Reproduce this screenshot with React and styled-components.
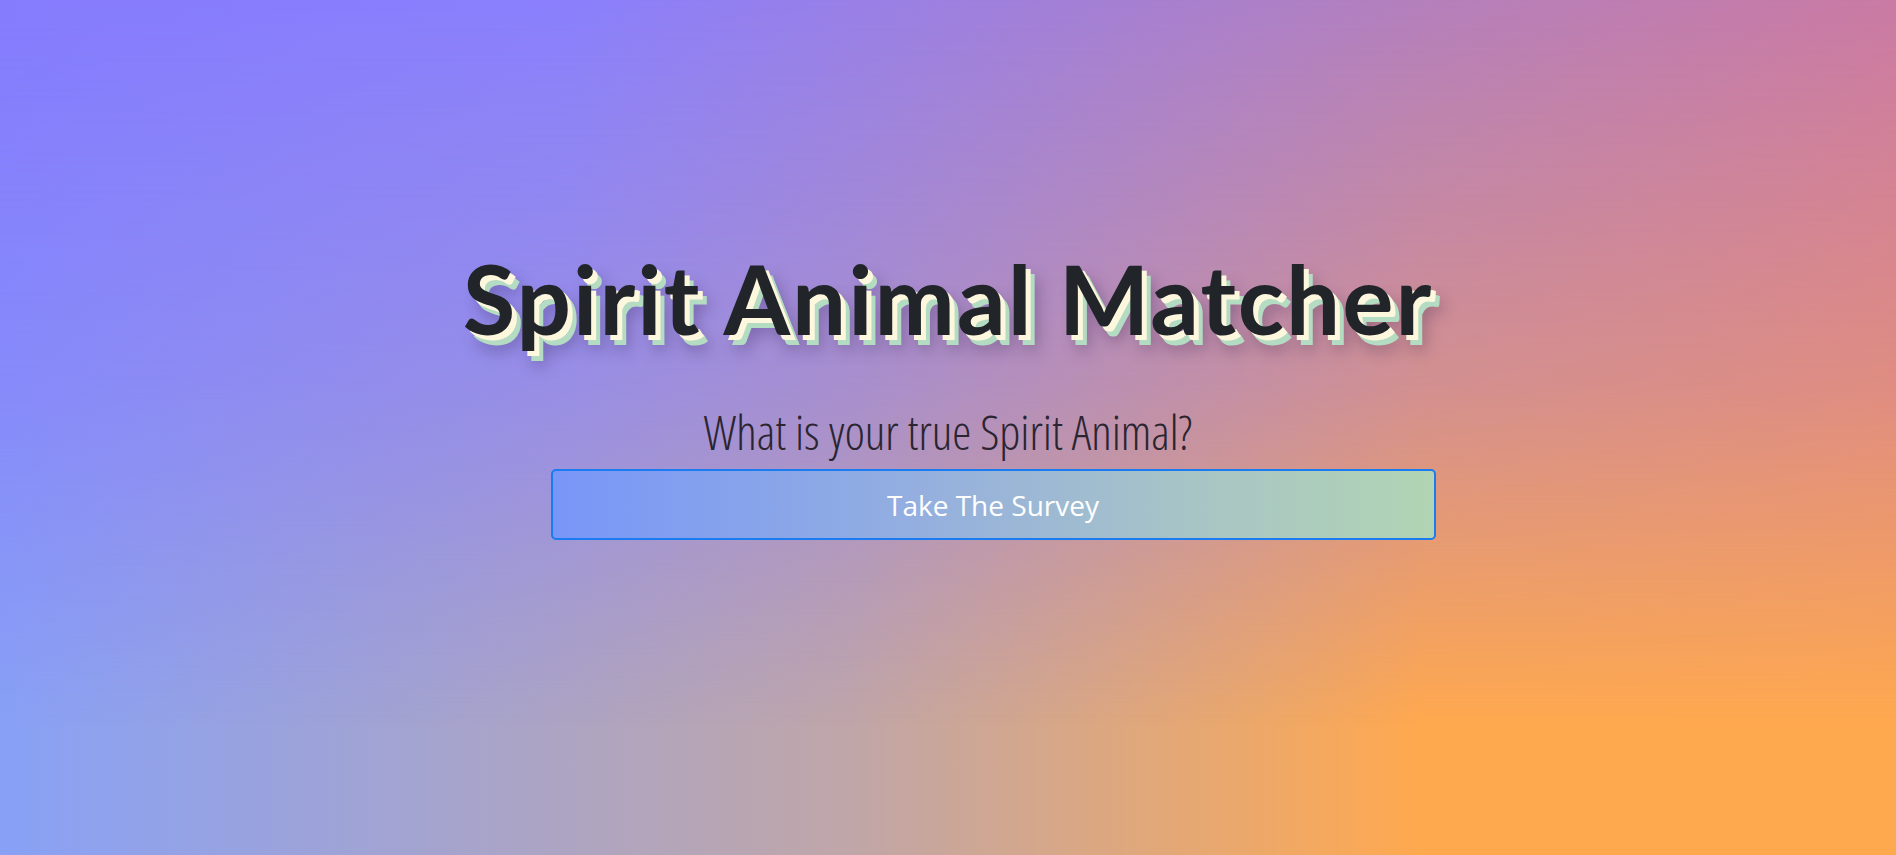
import styled, { createGlobalStyle } from 'styled-components';

const GlobalStyle = createGlobalStyle`
  html, body {
    margin: 0;
    padding: 0;
    height: 100%;
  }
  body {
    font-family: 'Open Sans', 'Noto Sans', sans-serif;
    color: #212529;
  }
`;

const Page = styled.main`
  position: relative;
  min-height: 100vh;
  overflow: hidden;
  background: linear-gradient(to right, #88a1f6 0%, #c0a6a8 45%, #ffa94f 75%, #ffa94f 100%);

  &::before {
    content: '';
    position: absolute;
    inset: 0;
    background: linear-gradient(to right, #857bfd 0%, #8a7ffc 30%, #b47fbc 75%, #ca7aa4 100%);
    -webkit-mask-image: linear-gradient(to bottom, #000 0%, rgba(0,0,0,0.6) 45%, transparent 85%);
    mask-image: linear-gradient(to bottom, #000 0%, rgba(0,0,0,0.6) 45%, transparent 85%);
  }
`;

const Hero = styled.section`
  position: relative;
  display: flex;
  flex-direction: column;
  align-items: center;
  padding-top: 240px;
`;

const Title = styled.h1`
  margin: 0;
  font-family: 'Lato', 'Noto Sans', sans-serif;
  font-weight: 700;
  font-size: 96px;
  letter-spacing: 2px;
  line-height: 1.2;
  color: #212529;
  text-shadow:
    5px 5px 0 #fdf7de,
    9px 10px 0 #b4dcc2,
    11px 15px 16px rgba(40, 20, 60, 0.35);
`;

const Subtitle = styled.p`
  margin: 51px 0 0;
  font-family: 'Open Sans', sans-serif;
  font-weight: 300;
  font-stretch: 75%;
  font-size: 48px;
  line-height: 1.1;
  color: #2a2530;
`;

const ButtonRow = styled.div`
  width: 885px;
  margin: 10px 0 0 90px;
`;

const SurveyButton = styled.button`
  display: block;
  width: 100%;
  height: 71px;
  padding-top: 3px;
  border: 2px solid #1b7bf0;
  border-radius: 5px;
  background: linear-gradient(to right, #7896f8 0%, #93aee0 40%, #a9c6c4 75%, #b1d4b3 100%);
  color: #fff;
  font-family: 'Open Sans', sans-serif;
  font-weight: 500;
  font-size: 28px;
  cursor: pointer;
`;

export default function App() {
  return (
    <>
      <GlobalStyle />
      <Page>
        <Hero>
          <Title>Spirit Animal Matcher</Title>
          <Subtitle>What is your true Spirit Animal?</Subtitle>
          <ButtonRow>
            <SurveyButton>Take The Survey</SurveyButton>
          </ButtonRow>
        </Hero>
      </Page>
    </>
  );
}
